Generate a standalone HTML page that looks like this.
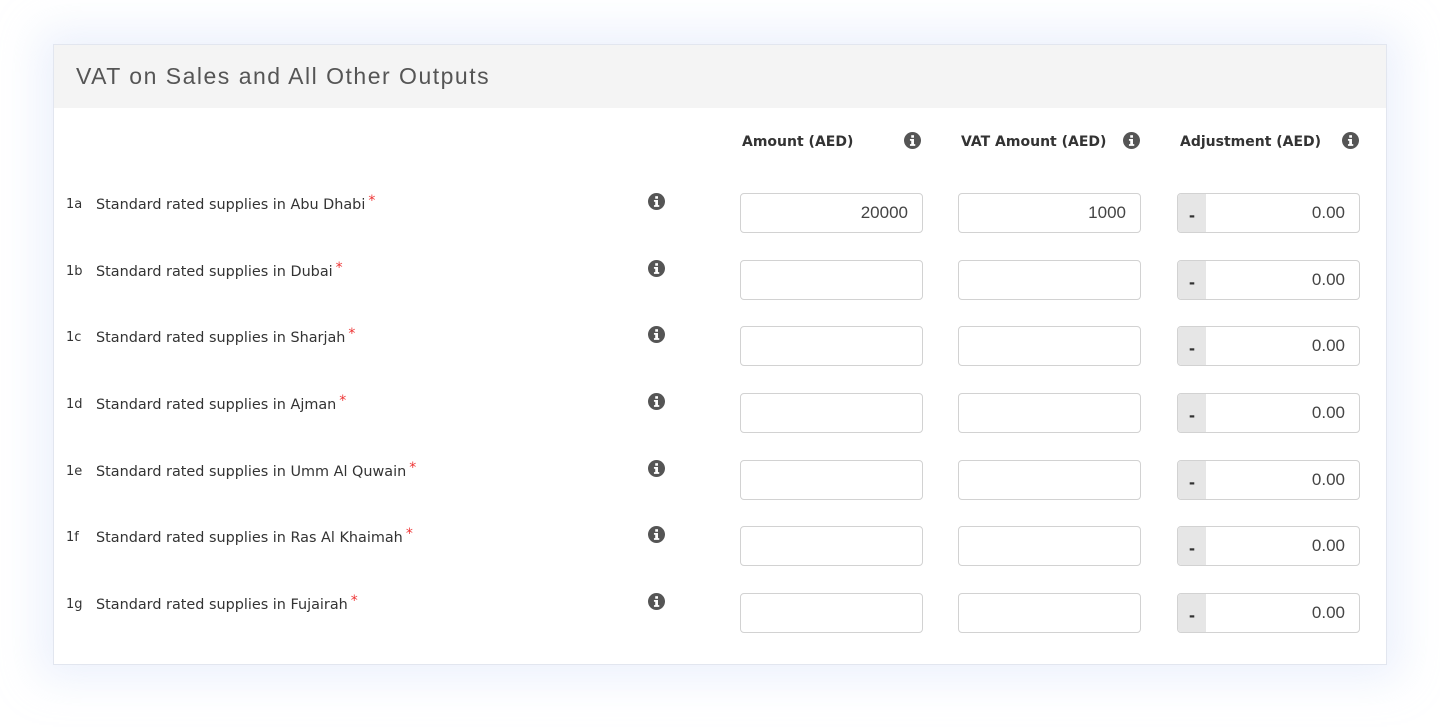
<!DOCTYPE html>
<html><head><style>
body{margin:0;width:1440px;height:727px;background:#fff;position:relative;overflow:hidden;font-family:"DejaVu Sans","Liberation Sans",Arial,sans-serif}
.card{position:absolute;left:53px;top:44px;width:1334px;height:621px;background:#fff;border:1px solid #e2e6ef;box-sizing:border-box;box-shadow:0 0 40px 14px rgba(200,215,245,.35)}
.hdr{position:absolute;left:0;top:0;right:0;height:63px;background:#f4f4f4}
.hdr span{position:absolute;left:22px;top:18px;font-size:23px;color:#555;font-family:"Liberation Sans",sans-serif;letter-spacing:1.5px}
.a{position:absolute}
.lbl{font-size:14.4px;color:#333;letter-spacing:0}
.num{font-size:13px;color:#333}
.star{color:#e33;font-size:14px;position:relative;top:-4px;margin-left:3px}
.th{font-size:14px;font-weight:bold;color:#333;letter-spacing:0}
.in{position:absolute;width:183px;height:40px;border:1px solid #d2d2d2;border-radius:4px;box-sizing:border-box;background:#fff;font-size:17px;color:#444;text-align:right;padding-right:14px;line-height:38px;font-family:"Liberation Sans",sans-serif}
.adj{overflow:hidden}
.adj b{position:absolute;left:0;top:0;width:28px;height:100%;background:#e6e6e6;color:#333;text-align:center;line-height:42px;font-size:18px}
</style></head><body>
<div class="card"><div class="hdr"><span>VAT on Sales and All Other Outputs</span></div></div>

<div class="a th" style="left:742px;top:134px">Amount (AED)</div>
<div class="a th" style="left:961px;top:134px">VAT Amount (AED)</div>
<div class="a th" style="left:1180px;top:134px">Adjustment (AED)</div>

<svg width="0" height="0" style="position:absolute"><defs><symbol id="i" viewBox="0 0 16 16"><circle cx="8" cy="8" r="8" fill="#555"/><rect x="6.8" y="3" width="2.6" height="2.4" fill="#fff"/><path d="M5.6 6.6h3.8v4.8h1.2v1.6H5.6v-1.6h1.2V8.2H5.6z" fill="#fff"/></symbol></defs></svg>

<svg class="a" style="left:904px;top:132px" width="17" height="17"><use href="#i"/></svg>
<svg class="a" style="left:1123px;top:132px" width="17" height="17"><use href="#i"/></svg>
<svg class="a" style="left:1342px;top:132px" width="17" height="17"><use href="#i"/></svg>

<div id="rows"></div>
<script>
var r=[["1a","Abu Dhabi","20000","1000"],["1b","Dubai","",""],["1c","Sharjah","",""],["1d","Ajman","",""],["1e","Umm Al Quwain","",""],["1f","Ras Al Khaimah","",""],["1g","Fujairah","",""]];
var h="";
r.forEach(function(x,k){var t=193+Math.round(k*66.67);
h+='<div class="a num" style="left:66px;top:'+(t+4)+'px">'+x[0]+'</div>';
h+='<div class="a lbl" style="left:96px;top:'+(t+4)+'px">Standard rated supplies in '+x[1]+'<span class="star">*</span></div>';
h+='<svg class="a" style="left:648px;top:'+(t)+'px" width="17" height="17"><use href="#i"/></svg>';
h+='<div class="in" style="left:740px;top:'+t+'px">'+x[2]+'</div>';
h+='<div class="in" style="left:958px;top:'+t+'px">'+x[3]+'</div>';
h+='<div class="in adj" style="left:1177px;top:'+t+'px"><b>-</b>0.00</div>';});
document.getElementById("rows").innerHTML=h;
</script>
</body></html>
